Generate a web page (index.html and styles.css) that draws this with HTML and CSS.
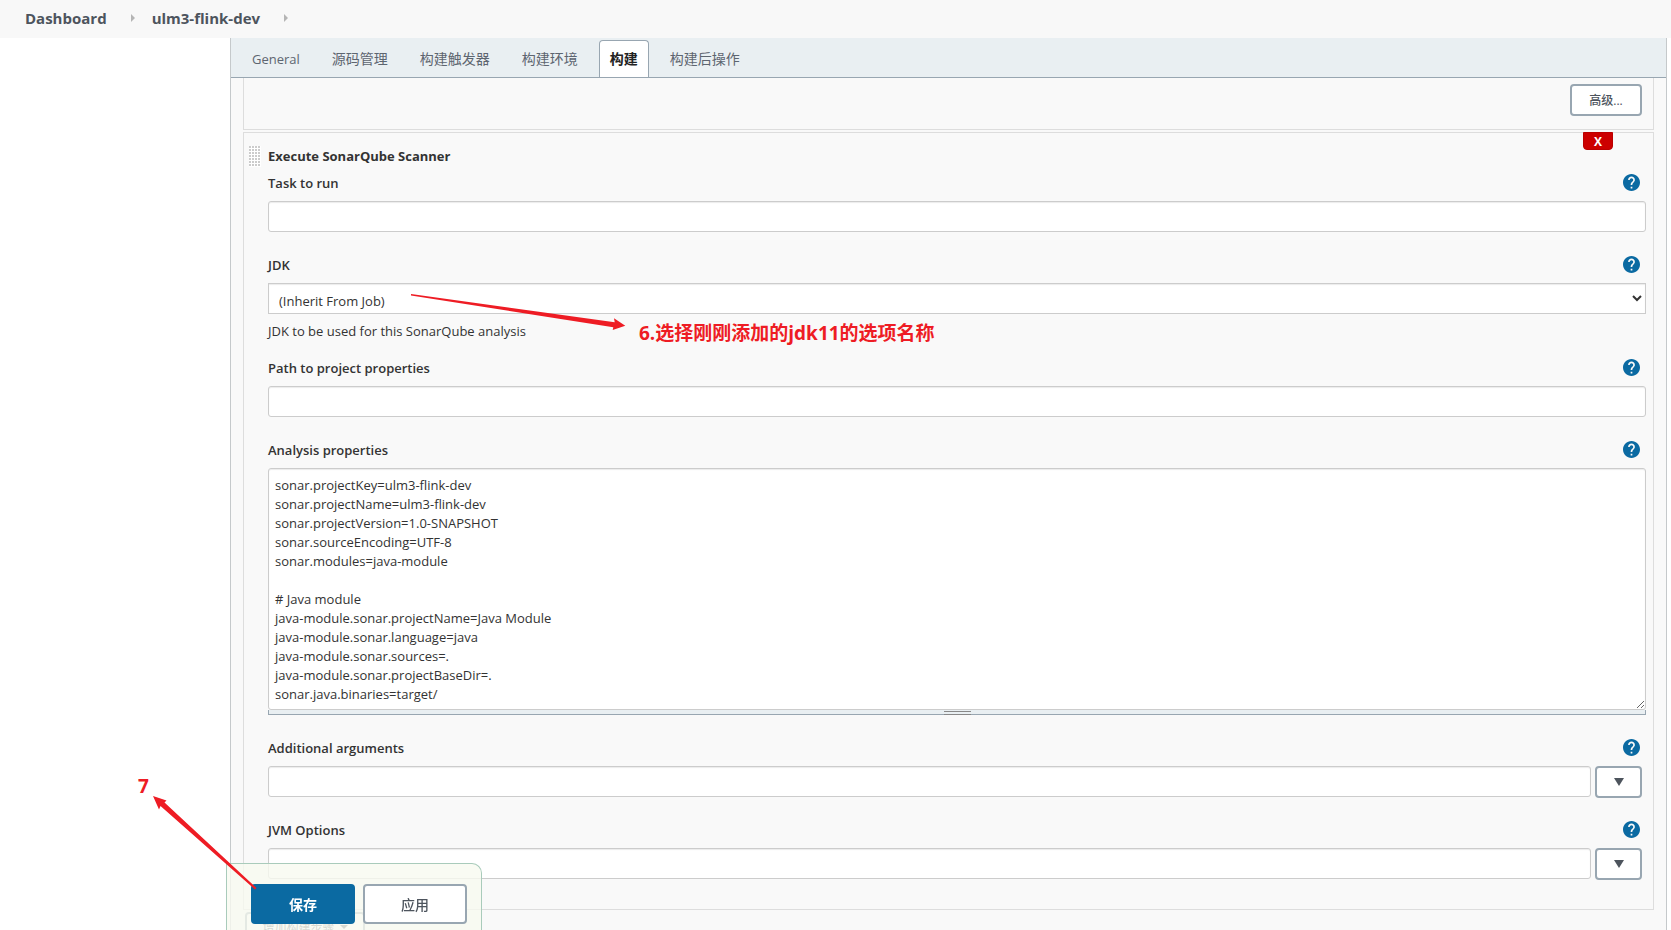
FILE: index.html
```html
<!DOCTYPE html>
<html lang="zh-CN">
<head>
<meta charset="utf-8">
<title>ulm3-flink-dev Config</title>
<link rel="stylesheet" href="styles.css">
</head>
<body>
<svg class="defs" aria-hidden="true">
  <symbol id="help" viewBox="2 2 20 20"><path fill="currentColor" d="M12 2C6.480 2 2 6.480 2 12s4.480 10 10 10 10-4.480 10-10S17.520 2 12 2zm1 17h-2v-2h2v2zm2.070-7.750l-.9.920C13.450 12.900 13 13.500 13 15h-2v-.5c0-1.100.45-2.100 1.170-2.830l1.240-1.260c.37-.36.59-.86.59-1.410 0-1.100-.9-2-2-2s-2 .9-2 2H8c0-2.210 1.790-4 4-4s4 1.790 4 4c0 .88-.36 1.680-.930 2.250z"/></symbol>
</svg>
<nav class="breadcrumbs" aria-label="Breadcrumb">
  <a href="#">Dashboard</a><span class="crumb-arrow"></span>
  <a href="#">ulm3-flink-dev</a><span class="crumb-arrow"></span>
</nav>
<main class="config">
  <nav class="tabs">
    <a class="tab tab-latin" href="#">General</a>
    <a class="tab" href="#">源码管理</a>
    <a class="tab" href="#">构建触发器</a>
    <a class="tab" href="#">构建环境</a>
    <a class="tab active" href="#">构建</a>
    <a class="tab" href="#">构建后操作</a>
  </nav>
  <form class="steps">
    <section class="chunk chunk-previous">
      <button type="button" class="btn btn-advanced">高级...</button>
    </section>
    <section class="chunk chunk-sonar">
      <button type="button" class="delete" aria-label="Delete">X</button>
      <div class="grip"></div>
      <h2 class="chunk-title">Execute SonarQube Scanner</h2>
      <div class="field">
        <div class="field-head"><label for="task">Task to run</label><button type="button" class="help" aria-label="Help"><svg><use href="#help"/></svg></button></div>
        <input class="control" id="task" type="text">
      </div>
      <div class="field field-described">
        <div class="field-head"><label for="jdk">JDK</label><button type="button" class="help" aria-label="Help"><svg><use href="#help"/></svg></button></div>
        <select class="control" id="jdk"><option>(Inherit From Job)</option></select>
        <p class="description">JDK to be used for this SonarQube analysis</p>
      </div>
      <div class="field">
        <div class="field-head"><label for="path">Path to project properties</label><button type="button" class="help" aria-label="Help"><svg><use href="#help"/></svg></button></div>
        <input class="control" id="path" type="text">
      </div>
      <div class="field">
        <div class="field-head"><label for="props">Analysis properties</label><button type="button" class="help" aria-label="Help"><svg><use href="#help"/></svg></button></div>
        <textarea class="control" id="props" rows="12" spellcheck="false">sonar.projectKey=ulm3-flink-dev
sonar.projectName=ulm3-flink-dev
sonar.projectVersion=1.0-SNAPSHOT
sonar.sourceEncoding=UTF-8
sonar.modules=java-module

# Java module
java-module.sonar.projectName=Java Module
java-module.sonar.language=java
java-module.sonar.sources=.
java-module.sonar.projectBaseDir=.
sonar.java.binaries=target/</textarea>
        <div class="drag-handle"><span></span></div>
      </div>
      <div class="field">
        <div class="field-head"><label for="args">Additional arguments</label><button type="button" class="help" aria-label="Help"><svg><use href="#help"/></svg></button></div>
        <div class="expandable"><input class="control" id="args" type="text"><button type="button" class="btn btn-expand" aria-label="Expand"><svg viewBox="0 0 10 8"><path d="M0 0h10L5 8z"/></svg></button></div>
      </div>
      <div class="field">
        <div class="field-head"><label for="jvm">JVM Options</label><button type="button" class="help" aria-label="Help"><svg><use href="#help"/></svg></button></div>
        <div class="expandable"><input class="control" id="jvm" type="text"><button type="button" class="btn btn-expand" aria-label="Expand"><svg viewBox="0 0 10 8"><path d="M0 0h10L5 8z"/></svg></button></div>
      </div>
    </section>
    <button type="button" class="btn btn-add">增加构建步骤<svg viewBox="0 0 8 4"><path d="M0 0h8L4 4z"/></svg></button>
  </form>
</main>
<div class="save-bar">
  <button type="button" class="btn btn-primary">保存</button>
  <button type="button" class="btn btn-apply">应用</button>
</div>
<div class="note note-jdk">6.选择刚刚添加的jdk11的选项名称</div>
<div class="note note-save">7</div>
<svg class="pointer pointer-jdk" viewBox="0 0 216 38"><path d="M1 1L1 2.500L203.300 34.300L202.700 37L215.300 32.700L204 25.300L204.700 29.300z"/></svg>
<svg class="pointer pointer-save" viewBox="0 0 104 94"><path d="M0 0L13.500 4.500L11.500 6.500L103.500 92L102 93.500L7.500 10L6 13.500z"/></svg>
</body>
</html>
```
FILE: styles.css
```css
* { box-sizing: border-box; }

body {
  margin: 0;
  height: 100vh;
  overflow: hidden;
  display: flex;
  flex-direction: column;
  background: #fff;
  color: #333;
  font: 13px/20px "Open Sans", "Noto Sans CJK SC", sans-serif;
}

button, input, select, textarea { font: inherit; color: inherit; }
a { color: inherit; text-decoration: none; }
.defs { position: absolute; width: 0; height: 0; }

.breadcrumbs {
  flex: none;
  display: flex;
  align-items: center;
  height: 38px;
  padding: 0 25px 2px;
  background: #f8f8f8;
  color: #4d545d;
  font-size: 15px;
  font-weight: 700;
}
.crumb-arrow {
  margin: 0 17px 0 24px;
  border: 4px solid transparent;
  border-left-color: #b5b5b5;
  border-right: 0;
}

.config {
  flex: 1 0 auto;
  margin: 0 4px 0 230px;
  border: 1px solid #c5c9cb;
  border-width: 0 1px;
  background: #f9f9f9;
}
.tabs {
  display: flex;
  align-items: flex-end;
  gap: 10px;
  height: 40px;
  padding-left: 10px;
  border-bottom: 1px solid #98a6b1;
  background: #e9eff2;
  color: #5d6570;
  font-size: 14px;
}
.tab {
  height: 37px;
  padding: 8px 10px 0;
  border: 1px solid transparent;
  border-bottom: 0;
  border-radius: 4px 4px 0 0;
}
.tab-latin { font-size: 13px; }
.tab.active {
  border-color: #98a6b1;
  background: #fff;
  color: #222;
  font-weight: 700;
}

.steps { padding: 0 12px; }
.chunk { border: 1px solid #ddd; }
.chunk-previous {
  display: flex;
  justify-content: flex-end;
  margin-bottom: 2px;
  padding: 6px 11px 13px;
  border-top: 0;
}
.chunk-sonar {
  position: relative;
  padding: 13px 7px 7px 24px;
}
.chunk-title { margin: 0 0 7px; font-size: 13px; line-height: 20px; }

.btn {
  border: 2px solid #98a6b1;
  border-radius: 4px;
  background: #fff;
  color: #4d545d;
  font-weight: 700;
}
.btn svg { fill: currentColor; }
.btn-advanced { width: 72px; height: 32px; padding: 2px 0 0; font-size: 12px; line-height: 16px; font-weight: 500; }
.delete {
  position: absolute;
  top: -1px;
  right: 40px;
  width: 30px;
  height: 18px;
  padding: 1px 0 0;
  border: 1px solid #b00;
  border-radius: 0 0 4px 4px;
  background: #c00;
  color: #fff;
  font-size: 12px;
  font-weight: 700;
  line-height: 16px;
}
.grip {
  position: absolute;
  top: 13px;
  left: 5px;
  width: 12px;
  height: 21px;
  background:
    linear-gradient(90deg, transparent 2px, #fff 2px) 0 0 / 3px 3px,
    linear-gradient(#ccc 2px, #fff 2px) 0 0 / 3px 3px;
}

.field { margin-bottom: 23px; }
.field-described { margin-bottom: 17px; }
.field-head {
  display: flex;
  justify-content: space-between;
  height: 20px;
  margin-bottom: 8px;
  padding-right: 6px;
  font-weight: 600;
}
.help { display: block; width: 17px; height: 17px; margin-top: 1px; padding: 0; border: 0; background: none; color: #0b6aa2; }
.help svg { display: block; width: 17px; height: 17px; }
.control {
  display: block;
  width: 100%;
  height: 31px;
  padding: 6px;
  border: 1px solid #ccc;
  border-radius: 3px;
  background: #fff;
  box-shadow: inset 0 1px 1px rgba(0, 0, 0, 0.08);
}
select.control { padding: 4px 2px 0 6px; border-radius: 0; }
textarea.control { height: 242px; padding-top: 7px; line-height: 19px; resize: both; overflow: hidden; }
.description { margin: 7px 0 0; }
.drag-handle {
  display: flex;
  justify-content: center;
  height: 5px;
  border: 1px solid #98a6b1;
  border-top: 0;
  background: #e9eff2;
}
.drag-handle span { width: 27px; height: 4px; margin-top: 1px; border: 1px solid #888; border-width: 1px 0; }
.expandable { display: flex; gap: 4px; padding-right: 4px; }
.btn-expand { flex: none; width: 47px; height: 32px; margin-bottom: -1px; padding: 0; }
.btn-expand svg { display: block; width: 10px; height: 8px; margin: 0 auto; }
.btn-add {
  width: 120px;
  height: 32px;
  margin: 2px 0 0 2px;
  padding: 0;
  font-size: 12px;
  line-height: 16px;
  font-weight: 400;
}
.btn-add svg { width: 8px; height: 4px; margin: 0 0 3px 5px; }

.save-bar {
  position: fixed;
  bottom: 0;
  left: 226px;
  display: flex;
  gap: 8px;
  padding: 20px 14px 6px 24px;
  border: 1px solid #a9cbbb;
  border-bottom: 0;
  border-radius: 0 10px 0 0;
  background: rgba(247, 250, 240, 0.8);
}
.save-bar .btn { width: 104px; height: 40px; padding: 1px 0 0; font-size: 14px; }
.save-bar .btn-primary { border-color: #0b6aa2; background: #0b6aa2; color: #fff; }
.save-bar .btn-apply { font-weight: 500; }

.note { position: absolute; color: #ee1c24; font-size: 19px; font-weight: 700; line-height: 24px; white-space: nowrap; }
.note-jdk { left: 639px; top: 321px; }
.note-save { left: 138px; top: 774px; }
.pointer { position: absolute; fill: #ee1c24; }
.pointer-jdk { left: 410px; top: 293px; width: 216px; height: 38px; }
.pointer-save { left: 153px; top: 796px; width: 104px; height: 94px; }
```
